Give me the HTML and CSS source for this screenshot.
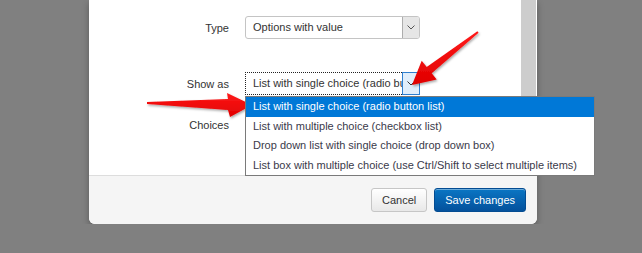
FILE: index.html
```html
<!DOCTYPE html>
<html lang="en">
<head>
    <meta charset="UTF-8">
    <title>Edit field</title>
    <link rel="stylesheet" href="styles.css">
</head>
<body>
    <div class="modal">
        <div class="modal-body">
            <div class="form">
                <div class="form-row row-type">
                    <label class="control-label">Type</label>
                    <div class="select">
                        <span class="select-value">Options with value</span>
                        <span class="select-btn">
                            <svg width="8" height="5" viewBox="0 0 8 5"><path d="M0.5 0.5 L4 4 L7.5 0.5" fill="none" stroke="#555" stroke-width="1"/></svg>
                        </span>
                    </div>
                </div>

                <div class="form-row row-show">
                    <label class="control-label">Show as</label>
                    <div class="select select-open">
                        <span class="select-value">List with single choice (radio button list)</span>
                        <span class="select-btn">
                            <svg width="8" height="5" viewBox="0 0 8 5"><path d="M0.5 0.5 L4 4 L7.5 0.5" fill="none" stroke="#333" stroke-width="1"/></svg>
                        </span>
                        <ul class="dropdown">
                            <li class="selected">List with single choice (radio button list)</li>
                            <li>List with multiple choice (checkbox list)</li>
                            <li>Drop down list with single choice (drop down box)</li>
                            <li>List box with multiple choice (use Ctrl/Shift to select multiple items)</li>
                        </ul>
                    </div>
                </div>

                <div class="form-row row-choices">
                    <label class="control-label">Choices</label>
                </div>
            </div>
            <div class="scrollbar"></div>
        </div>
        <div class="modal-footer">
            <button type="button" class="btn">Cancel</button>
            <button type="button" class="btn btn-primary">Save changes</button>
        </div>
    </div>

    <!-- annotation arrows drawn over the screenshot -->
    <svg class="arrows" width="642" height="253" viewBox="0 0 642 253">
        <defs>
            <linearGradient id="red" x1="0" y1="0" x2="0" y2="1">
                <stop offset="0" stop-color="#ff1a1a"/>
                <stop offset="1" stop-color="#e00000"/>
            </linearGradient>
            <filter id="shadow" x="-20%" y="-20%" width="140%" height="140%">
                <feDropShadow dx="1" dy="1.5" stdDeviation="1.2" flood-color="#000" flood-opacity="0.35"/>
            </filter>
        </defs>
        <polygon filter="url(#shadow)" fill="url(#red)"
            points="478.6,32.8 431.7,73.3 436.7,79.6 412,85 421.7,60.8 426.7,67.1 477.4,31.2"/>
        <polygon filter="url(#shadow)" fill="url(#red)"
            points="147,102 228,99 227,93 252,105 230,117 228,110 147,104"/>
    </svg>
</body>
</html>
```

FILE: styles.css
```css
body {
    margin: 0;
    background-color: #808080;
    font-family: "Liberation Sans", Arial, sans-serif;
    font-size: 11px;
    color: #333;
    overflow: hidden;
}
.modal {
    width: 448px;
    margin-left: 89px;
    background-color: #fff;
    border-radius: 0 0 6px 6px;
    box-shadow: 0 3px 7px rgba(0, 0, 0, 0.3);
}
.modal-body {
    display: flex;
    height: 175px;
}
.form {
    flex: 1;
    padding-top: 16px;
}
.scrollbar {
    width: 15px;
    background-color: #cdcdcd;
    border-right: 1px solid #fff;
}
.form-row {
    display: flex;
    align-items: center;
    gap: 16px;
    height: 23px;
}
.row-show {
    margin-top: 33px;
}
.row-choices {
    margin-top: 18px;
}
.control-label {
    width: 140px;
    text-align: right;
    color: #333;
}
.select {
    position: relative;
    display: flex;
    width: 175px;
    height: 23px;
    box-sizing: border-box;
    border: 1px solid #c4c4c4;
    border-radius: 3px;
    background-color: #fff;
}
.select-value {
    flex: 1;
    padding-left: 7px;
    line-height: 21px;
    white-space: nowrap;
    overflow: hidden;
}
.select-btn {
    width: 16px;
    display: flex;
    align-items: center;
    justify-content: center;
    background-color: #e6e6e6;
    border-left: 1px solid #adadad;
    border-radius: 0 2px 2px 0;
}
.select-open {
    border: 1px dotted #222;
    border-radius: 0;
}
.select-open .select-btn {
    margin: -1px -1px -1px 0;
    background-color: #e0eefb;
    border: 1px solid #2f7fcf;
    border-radius: 0;
}
.dropdown {
    position: absolute;
    top: 23px;
    left: -1px;
    width: 350px;
    box-sizing: border-box;
    margin: 0;
    padding: 0;
    list-style: none;
    background-color: #fff;
    border: 1px solid #7a7a7a;
    z-index: 2;
}
.dropdown li {
    height: 19.5px;
    line-height: 19.5px;
    padding-left: 7px;
    white-space: nowrap;
    color: #3a3a4a;
}
.dropdown li.selected {
    background-color: #0078d7;
    color: #fff;
}
.modal-footer {
    display: flex;
    justify-content: flex-end;
    gap: 7px;
    padding: 12px 11px 12px 0;
    background-color: #f5f5f5;
    border-top: 1px solid #dddddd;
    border-radius: 0 0 6px 6px;
}
.btn {
    height: 24px;
    padding: 0 10px;
    font-family: "Liberation Sans", Arial, sans-serif;
    font-size: 11px;
    color: #333;
    background-image: linear-gradient(#ffffff, #e8e8e8);
    border: 1px solid #c6c6c6;
    border-radius: 3px;
    box-shadow: inset 0 1px 0 rgba(255, 255, 255, 0.4);
    cursor: pointer;
}
.btn-primary {
    color: #fff;
    background-image: linear-gradient(#0a76c4, #04519c);
    border-color: #044c92;
}
.arrows {
    position: absolute;
    top: 0;
    left: 0;
    pointer-events: none;
}
```
